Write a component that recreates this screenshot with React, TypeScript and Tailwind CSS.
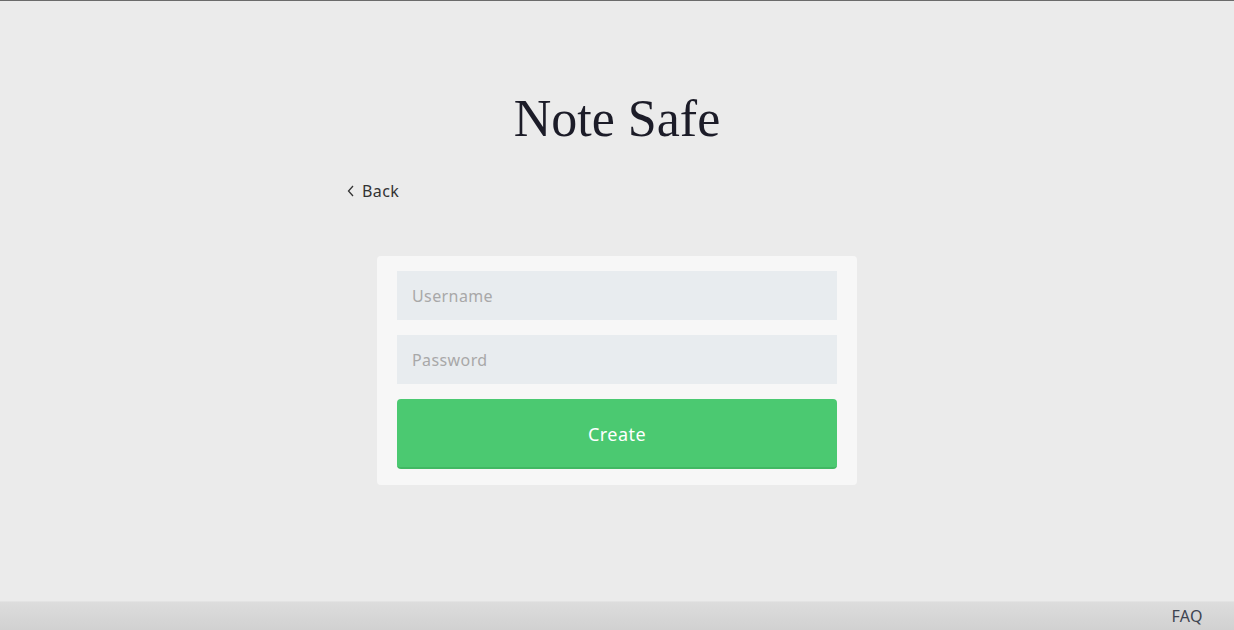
import React from 'react'

export default function App() {
  return (
    <div className="flex h-[630px] w-full flex-col overflow-hidden border-t border-[#6b6b6b] bg-[#ebebeb]">
      <main className="flex flex-1 flex-col items-center">
        <h1 className="mt-[88px] font-['Liberation_Serif',serif] text-[52px] font-normal leading-[60px] text-[#1c1c28]">
          Note Safe
        </h1>
        <div className="mt-[30px] w-[540px]">
          <a className="flex items-center gap-[7px] font-['Noto_Sans',sans-serif] text-[16px] tracking-wide text-[#333] cursor-pointer">
            <svg width="8" height="12" viewBox="0 0 8 12" fill="none" stroke="#333" strokeWidth="1.3">
              <path d="M6 1 1.5 6 6 11" />
            </svg>
            Back
          </a>
        </div>
        <form className="mt-[53px] flex w-[480px] flex-col gap-[15px] rounded bg-[#f7f7f7] px-5 pt-[15px] pb-4">
          <input
            placeholder="Username"
            className="h-[49px] bg-[#e8ecef] px-[15px] font-['Noto_Sans',sans-serif] text-[16px] tracking-wide text-[#555] outline-none placeholder:text-[#a8a8a8]"
          />
          <input
            type="password"
            placeholder="Password"
            className="h-[49px] bg-[#e8ecef] px-[15px] font-['Noto_Sans',sans-serif] text-[16px] tracking-wide text-[#555] outline-none placeholder:text-[#a8a8a8]"
          />
          <button
            type="button"
            className="h-[70px] rounded border-b-2 border-[#41b863] bg-[#4bc971] pt-[2px] font-['Noto_Sans',sans-serif] text-[18px] tracking-wide text-white"
          >
            Create
          </button>
        </form>
      </main>
      <footer className="flex h-[29px] items-center justify-end bg-gradient-to-b from-[#dddddd] to-[#d1d1d1] pr-[31px] shadow-[inset_0_1px_0_#e3e3e3]">
        <span className="font-['Noto_Sans',sans-serif] text-[16px] tracking-wide text-[#3e4450]">FAQ</span>
      </footer>
    </div>
  )
}
